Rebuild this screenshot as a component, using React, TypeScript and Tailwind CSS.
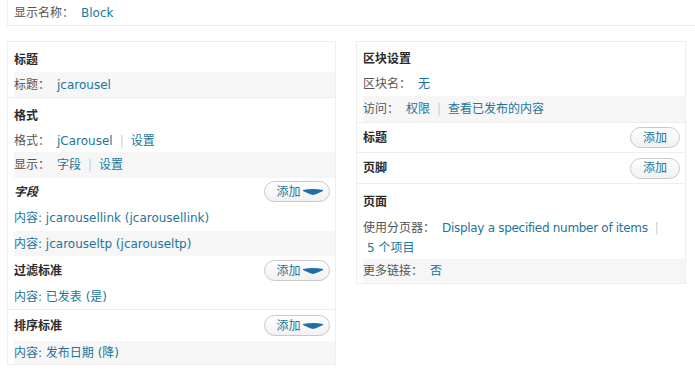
import React from "react";

const font = { fontFamily: '"DejaVu Sans", "Noto Sans CJK SC", sans-serif' };

const Sep = () => <span className="mx-[7px] text-[#cccccc]">|</span>;

const Link = ({ children }: { children: React.ReactNode }) => (
  <span className="text-[#21759b]">{children}</span>
);

const AddButton = ({ dropdown }: { dropdown?: boolean }) => (
  <div
    className={`flex items-center justify-center h-[21px] rounded-full border border-[#c8c8c8] bg-gradient-to-b from-white to-[#f1f1f1] text-[#21759b] text-[12px] ${
      dropdown ? "w-[66px] pl-[6px]" : "w-[50px]"
    }`}
  >
    <span>添加</span>
    {dropdown && (
      <svg width="22" height="8" viewBox="0 0 22 8" className="ml-[1px]">
        <path d="M1 2 Q11 0 21 2 L21 3 Q15 6 11 7 Q7 6 1 3 Z" fill="#1f6ea6" />
      </svg>
    )}
  </div>
);

const Heading = ({
  title,
  italic,
  button,
  h = "h-[30px]",
}: {
  title: string;
  italic?: boolean;
  button?: "drop" | "plain";
  h?: string;
}) => (
  <div className={`flex items-center justify-between pr-[5px] ${h}`}>
    <span className={`font-bold text-[#2b2b2b] ${italic ? "italic" : ""}`}>{title}</span>
    {button && <AddButton dropdown={button === "drop"} />}
  </div>
);

const Row = ({
  gray,
  children,
  h = "h-[25px]",
}: {
  gray?: boolean;
  children: React.ReactNode;
  h?: string;
}) => (
  <div className={`flex items-center text-[#555555] ${h} ${gray ? "bg-[#f6f6f6]" : ""}`}>
    {children}
  </div>
);

export default function App() {
  return (
    <div className="w-[695px] h-[374px] bg-white text-[12px] overflow-hidden" style={font}>
      <div className="ml-[7px] h-[26px] border-l border-b border-[#eeeeee] flex items-center pl-[6px] text-[#555555]">
        <span>显示名称：</span>
        <span className="ml-[7px]">
          <Link>Block</Link>
        </span>
      </div>

      <div className="flex items-start mt-[15px] ml-[7px]">
        {/* left column */}
        <div className="w-[329px] border border-[#eeeeee] [&>div]:pl-[6px]">
          <div className="border-b border-[#eeeeee]">
            <Heading title="标题" h="h-[30px] pt-[5px]" />
            <Row gray>
              标题：<span className="ml-[7px]"><Link>jcarousel</Link></span>
            </Row>
          </div>
          <div>
            <Heading title="格式" h="h-[31px] pt-[4px]" />
            <Row h="h-[23px]">
              格式：<span className="ml-[7px]"><Link>jCarousel</Link></span>
              <Sep />
              <Link>设置</Link>
            </Row>
            <Row gray h="h-[26px]">
              显示：<span className="ml-[7px]"><Link>字段</Link></span>
              <Sep />
              <Link>设置</Link>
            </Row>
          </div>
          <div>
            <Heading title="字段" italic button="drop" h="h-[27px]" />
            <Row h="h-[26px]">
              <Link>内容: jcarousellink (jcarousellink)</Link>
            </Row>
            <Row gray>
              <Link>内容: jcarouseltp (jcarouseltp)</Link>
            </Row>
          </div>
          <div className="border-b border-[#eeeeee]">
            <Heading title="过滤标准" button="drop" h="h-[29px]" />
            <Row h="h-[24px]">
              <Link>内容: 已发表 (是)</Link>
            </Row>
          </div>
          <div>
            <Heading title="排序标准" button="drop" h="h-[31px]" />
            <Row gray h="h-[23px]">
              <Link>内容: 发布日期 (降)</Link>
            </Row>
          </div>
        </div>

        {/* right column */}
        <div className="w-[330px] ml-[20px] border border-[#eeeeee] [&>div]:pl-[6px]">
          <div className="border-b border-[#eeeeee]">
            <Heading title="区块设置" h="h-[30px] pt-[4px]" />
            <Row h="h-[24px]">
              区块名：<span className="ml-[7px]"><Link>无</Link></span>
            </Row>
            <Row gray h="h-[26px]">
              访问：<span className="ml-[7px]"><Link>权限</Link></span>
              <Sep />
              <Link>查看已发布的内容</Link>
            </Row>
          </div>
          <div className="border-b border-[#eeeeee]">
            <Heading title="标题" button="plain" h="h-[29px]" />
          </div>
          <div className="border-b border-[#eeeeee]">
            <Heading title="页脚" button="plain" h="h-[30px]" />
          </div>
          <div>
            <Heading title="页面" h="h-[32px] pt-[4px]" />
            <div className="text-[#555555] h-[43px] pt-[2px] leading-[20px]">
              <div className="flex whitespace-nowrap">
                <span>使用分页器：</span>
                <span className="ml-[7px] tracking-[-0.3px]">
                  <Link>Display a specified number of items</Link>
                </span>
                <Sep />
              </div>
              <div className="pl-[4px]">
                <Link>5 个项目</Link>
              </div>
            </div>
            <Row gray h="h-[24px]">
              更多链接：<span className="ml-[7px]"><Link>否</Link></span>
            </Row>
          </div>
        </div>
      </div>
    </div>
  );
}
